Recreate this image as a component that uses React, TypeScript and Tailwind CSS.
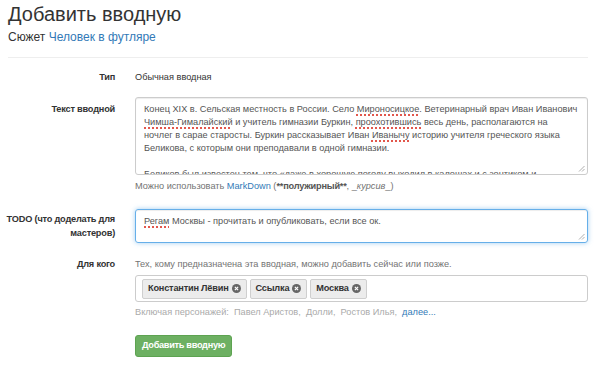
import React from 'react';

const font = { fontFamily: '"Liberation Sans", Arial, sans-serif' };

function Grip() {
  return (
    <svg width="7" height="7" viewBox="0 0 7 7" className="absolute right-[2px] bottom-[2px]">
      <path d="M6.5 1 L1 6.5 M6.5 4 L4 6.5" stroke="#999" strokeWidth="0.8" fill="none" />
    </svg>
  );
}

function Typo({ children }: { children: React.ReactNode }) {
  return <span className="underline decoration-dotted decoration-[#e2574c] decoration-[1.5px] underline-offset-[2px]">{children}</span>;
}

function Tag({ label }: { label: string }) {
  return (
    <span className="flex items-center gap-[3px] h-[20px] px-[5px] bg-[#ececec] border border-[#cfcfcf] rounded-[2px] text-[9.2px] tracking-[-0.2px] font-bold text-[#333]">
      {label}
      <svg width="9" height="9" viewBox="0 0 10 10">
        <circle cx="5" cy="5" r="5" fill="#666" />
        <path d="M3.2 3.2 L6.8 6.8 M6.8 3.2 L3.2 6.8" stroke="#fff" strokeWidth="1.3" />
      </svg>
    </span>
  );
}

export default function App() {
  return (
    <div className="w-[598px] h-[372px] bg-white text-[#333] overflow-hidden pl-[8px] pr-[10px]" style={font}>
      <h1 className="text-[20px] leading-[24px] pt-[2px] text-[#333]">Добавить вводную</h1>
      <p className="text-[12px] leading-[16px] mt-[3px]">
        Сюжет <span className="text-[#337ab7]">Человек в футляре</span>
      </p>
      <div className="mt-[12px] border-t border-[#eee]" />

      <div className="grid grid-cols-[107px_1fr] gap-x-[20px] mt-[12px] text-[9.2px]">
        <div className="text-right font-bold tracking-[-0.2px] leading-[14px]">Тип</div>
        <div className="leading-[14px]">Обычная вводная</div>

        <div className="text-right font-bold tracking-[-0.2px] leading-[14px] mt-[13px] pt-[5px]">Текст вводной</div>
        <div className="mt-[13px]">
          <div className="relative h-[78px] border border-[#ccc] rounded-[3px] shadow-[inset_0_1px_1px_rgba(0,0,0,0.075)] overflow-hidden px-[8px] pt-[5px] text-[#555] leading-[13px] whitespace-nowrap">
            <div>Конец XIX в. Сельская местность в России. Село <Typo>Мироносицкое</Typo>. Ветеринарный врач Иван Иванович</div>
            <div><Typo>Чимша-Гималайский</Typo> и учитель гимназии Буркин, <Typo>проохотившись</Typo> весь день, располагаются на</div>
            <div>ночлег в сарае старосты. Буркин рассказывает Иван <Typo>Иванычу</Typo> историю учителя греческого языка</div>
            <div>Беликова, с которым они преподавали в одной гимназии.</div>
            <div>&nbsp;</div>
            <div>Беликов был известен тем, что «даже в хорошую погоду выходил в калошах и с зонтиком и</div>
            <Grip />
          </div>
          <p className="mt-[4px] leading-[14px] text-[#737373]">
            Можно использовать <span className="text-[#337ab7]">MarkDown</span> (<b className="text-[#555] tracking-[-0.2px]">**полужирный**</b>, _<i>курсив</i>_)
          </p>
        </div>

        <div className="flex flex-col items-end font-bold tracking-[-0.2px] leading-[14px] mt-[16px] pt-[3px] whitespace-nowrap">
          <span>TODO (что доделать для</span>
          <span>мастеров)</span>
        </div>
        <div className="mt-[16px]">
          <div className="relative h-[34px] border border-[#66afe9] rounded-[3px] shadow-[inset_0_1px_1px_rgba(0,0,0,0.075),0_0_5px_rgba(102,175,233,0.6)] px-[8px] pt-[5px] text-[#555] leading-[13px]">
            <Typo>Регам</Typo> Москвы - прочитать и опубликовать, если все ок.
            <Grip />
          </div>
        </div>

        <div className="text-right font-bold tracking-[-0.2px] leading-[14px] mt-[14px]">Для кого</div>
        <div className="mt-[14px]">
          <p className="leading-[14px] text-[#737373]">Тех, кому предназначена эта вводная, можно добавить сейчас или позже.</p>
          <div className="mt-[4px] h-[27px] border border-[#ccc] rounded-[3px] flex items-center gap-[3px] px-[6px]">
            <Tag label="Константин Лёвин" />
            <Tag label="Ссылка" />
            <Tag label="Москва" />
          </div>
          <p className="mt-[3px] leading-[14px] text-[#aaa]">
            Включая персонажей:&nbsp; Павел Аристов,&nbsp; Долли,&nbsp; Ростов Илья,&nbsp; <span className="text-[#337ab7]">далее...</span>
          </p>
          <button className="mt-[16px] h-[22px] px-[6px] bg-[#6db062] border border-[#5da351] rounded-[3px] text-white text-[9.2px] tracking-[-0.3px] font-bold">
            Добавить вводную
          </button>
        </div>
      </div>
    </div>
  );
}
